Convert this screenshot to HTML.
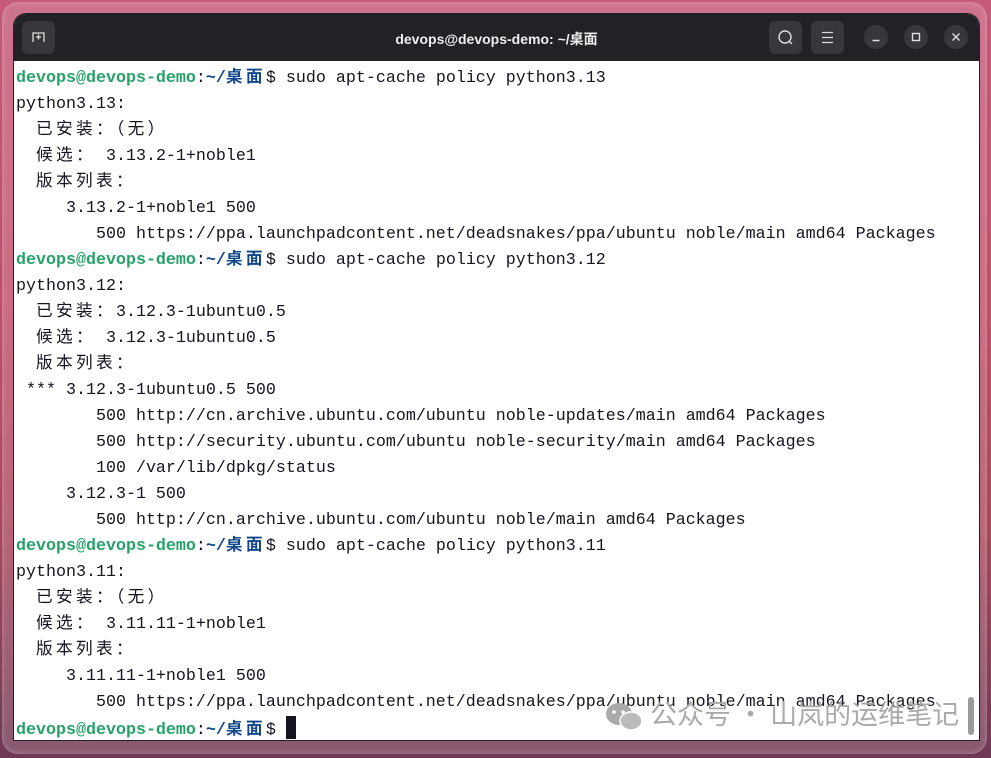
<!DOCTYPE html>
<html><head><meta charset="utf-8"><style>
html,body{margin:0;padding:0;}
body{width:991px;height:758px;overflow:hidden;position:relative;
background:linear-gradient(180deg,#c45a78 0%,#c0506a 40%,#a8485c 70%,#6e3a55 100%);}
.frame{position:absolute;left:2px;top:2px;width:985px;height:752px;border-radius:16px;background:rgba(255,235,240,0.18);box-shadow:0 0 6px rgba(255,255,255,.3) inset;}
.win{position:absolute;left:14px;top:14px;width:965px;height:726px;background:#fff;border-radius:12px 12px 0 0;overflow:hidden;box-shadow:0 0 0 1px #222;}
.hdr{position:absolute;left:0;top:0;width:965px;height:47px;background:#222226;}
.title{position:absolute;left:0;right:0;top:15px;text-align:center;color:#eee;font:bold 14px "Liberation Sans","Noto Sans CJK SC",sans-serif;}
.btn{position:absolute;top:7px;width:33px;height:33px;border-radius:6px;background:#38383c;}
.cb{position:absolute;top:11px;width:24px;height:24px;border-radius:50%;background:#38383c;}
.term{position:absolute;left:2px;top:52px;font:16.67px/26px "Liberation Mono","Noto Sans CJK SC",monospace;color:#171421;white-space:pre;}
.term div{height:26px;overflow:visible;}
.c{letter-spacing:3.33px;font-family:"Noto Sans CJK SC",sans-serif;line-height:10px;}
.g{color:#26a269;font-weight:bold}.b{color:#12488b;font-weight:bold}
.cur{display:inline-block;width:10px;height:23px;background:#171421;vertical-align:-5px;}
.wm{position:absolute;left:650px;top:696px;font:27px/34px "Noto Sans CJK SC",sans-serif;color:#aaa;white-space:nowrap;}
.sb{position:absolute;left:954px;top:683px;width:6px;height:38px;border-radius:3px;background:#9a9a9a;}
</style></head><body>
<div class="frame"></div>
<div class="win">
<div class="hdr">
<div class="btn" style="left:8px"><svg width="33" height="33"><path d="M11 21v-9h11v9M16.5 13.5v5M14 16h5" stroke="#ddd" stroke-width="1.3" fill="none"/></svg></div>
<div class="title">devops@devops-demo: ~/桌面</div>
<div class="btn" style="left:755px"><svg width="33" height="33"><circle cx="16" cy="16" r="6" stroke="#ddd" stroke-width="1.4" fill="none"/><path d="M20 20l3 3" stroke="#ddd" stroke-width="1.4"/></svg></div>
<div class="btn" style="left:797px"><svg width="33" height="33"><path d="M11 11.5h11M11 16.5h11M11 21.5h11" stroke="#ddd" stroke-width="1.3"/></svg></div>
<div class="cb" style="left:850px"><svg width="24" height="24"><path d="M8.5 15.5h7" stroke="#ddd" stroke-width="1.4"/></svg></div>
<div class="cb" style="left:890px"><svg width="24" height="24"><rect x="8.5" y="8.5" width="7" height="7" stroke="#ddd" stroke-width="1.4" fill="none"/></svg></div>
<div class="cb" style="left:930px"><svg width="24" height="24"><path d="M8.5 8.5l7 7M15.5 8.5l-7 7" stroke="#ddd" stroke-width="1.4"/></svg></div>
</div>
<div class="term"><div><span class="g">devops@devops-demo</span>:<span class="b">~/<span class="c">桌面</span></span>$ sudo apt-cache policy python3.13</div><div>python3.13:</div><div>  <span class="c">已安装：（无）</span></div><div>  <span class="c">候选：</span> 3.13.2-1+noble1</div><div>  <span class="c">版本列表：</span></div><div>     3.13.2-1+noble1 500</div><div>        500 https://ppa.launchpadcontent.net/deadsnakes/ppa/ubuntu noble/main amd64 Packages</div><div><span class="g">devops@devops-demo</span>:<span class="b">~/<span class="c">桌面</span></span>$ sudo apt-cache policy python3.12</div><div>python3.12:</div><div>  <span class="c">已安装：</span>3.12.3-1ubuntu0.5</div><div>  <span class="c">候选：</span> 3.12.3-1ubuntu0.5</div><div>  <span class="c">版本列表：</span></div><div> *** 3.12.3-1ubuntu0.5 500</div><div>        500 http://cn.archive.ubuntu.com/ubuntu noble-updates/main amd64 Packages</div><div>        500 http://security.ubuntu.com/ubuntu noble-security/main amd64 Packages</div><div>        100 /var/lib/dpkg/status</div><div>     3.12.3-1 500</div><div>        500 http://cn.archive.ubuntu.com/ubuntu noble/main amd64 Packages</div><div><span class="g">devops@devops-demo</span>:<span class="b">~/<span class="c">桌面</span></span>$ sudo apt-cache policy python3.11</div><div>python3.11:</div><div>  <span class="c">已安装：（无）</span></div><div>  <span class="c">候选：</span> 3.11.11-1+noble1</div><div>  <span class="c">版本列表：</span></div><div>     3.11.11-1+noble1 500</div><div>        500 https://ppa.launchpadcontent.net/deadsnakes/ppa/ubuntu noble/main amd64 Packages</div><div><span class="g">devops@devops-demo</span>:<span class="b">~/<span class="c">桌面</span></span>$ <span class="cur"></span></div></div>
<div class="sb"></div>
</div>
<svg style="position:absolute;left:604px;top:700px" width="40" height="34"><ellipse cx="15" cy="14" rx="13" ry="11" fill="#aaa"/><ellipse cx="27" cy="21" rx="11" ry="9" fill="#bbb" stroke="#fff" stroke-width="1.5"/><circle cx="10" cy="12" r="1.8" fill="#fff"/><circle cx="19" cy="12" r="1.8" fill="#fff"/></svg>
<div class="wm">公众号 · 山岚的运维笔记</div>
</body></html>
